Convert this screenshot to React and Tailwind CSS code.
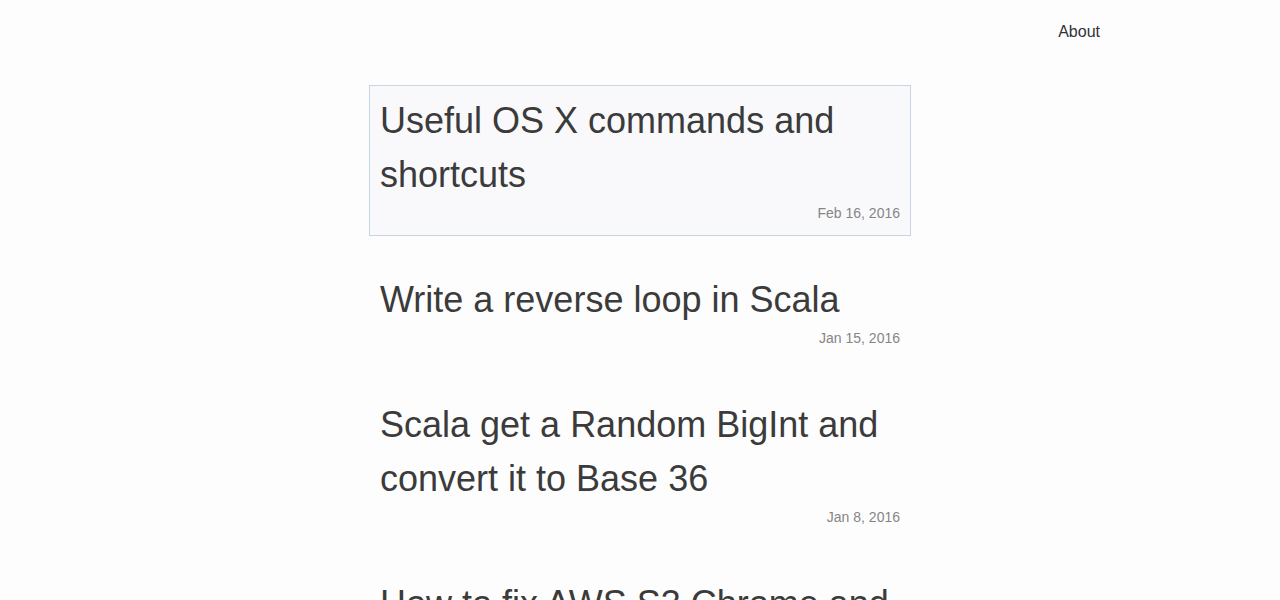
import React from 'react';

const posts = [
  { title: 'Useful OS X commands and shortcuts', date: 'Feb 16, 2016', active: true },
  { title: 'Write a reverse loop in Scala', date: 'Jan 15, 2016' },
  { title: 'Scala get a Random BigInt and convert it to Base 36', date: 'Jan 8, 2016' },
  { title: 'How to fix AWS S3 Chrome and Safari CORS issue', date: 'Dec 20, 2015' },
  { title: 'Git cheat sheet', date: 'Nov 2, 2015' },
];

function PostCard({ post }) {
  return (
    <a
      href="#"
      className={
        'block border px-[10px] pt-[8px] pb-[13px] ' +
        (post.active ? 'border-[#c6d5e6] bg-[#f9f9fc]' : 'border-transparent')
      }
    >
      <h2 className="text-[36px] leading-[54px] font-normal text-[#3b3b3b]">{post.title}</h2>
      <div className="mt-[2px] text-right text-[14px] leading-[18px] text-[#858585]">{post.date}</div>
    </a>
  );
}

export default function App() {
  return (
    <div
      className="min-h-screen bg-[#fdfdfd] text-[#333]"
      style={{ fontFamily: '"Liberation Sans", Arial, sans-serif' }}
    >
      <header className="max-w-[920px] mx-auto flex justify-end pt-[20px] pb-[18px]">
        <a href="#" className="text-[16px] leading-6 text-[#333]">
          About
        </a>
      </header>
      <main className="w-[542px] mx-auto pt-[23px] pb-16 flex flex-col gap-[28px]">
        {posts.map((post) => (
          <PostCard key={post.title} post={post} />
        ))}
      </main>
    </div>
  );
}
